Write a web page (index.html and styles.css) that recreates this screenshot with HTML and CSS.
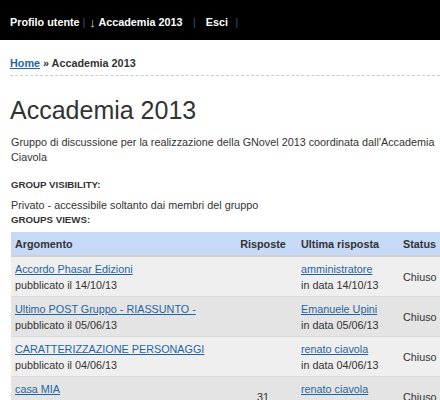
FILE: index.html
```html
<!DOCTYPE html>
<html lang="it">
<head>
<meta charset="utf-8">
<title>Accademia 2013</title>
<link rel="stylesheet" href="styles.css">
</head>
<body>
<div class="topnav">
  <a class="nav-item" href="#">Profilo utente</a>
  <span class="nav-sep nav-sep-first">|</span>
  <span class="nav-arrow">↓</span>
  <a class="nav-item" href="#">Accademia 2013</a>
  <span class="nav-sep">|</span>
  <a class="nav-item" href="#">Esci</a>
  <span class="nav-sep nav-sep-last">|</span>
</div>
<div class="breadcrumb"><a href="#">Home</a> » Accademia 2013</div>
<div class="content">
  <h1 class="title">Accademia 2013</h1>
  <p class="desc">Gruppo di discussione per la realizzazione della GNovel 2013 coordinata dall'Accademia Ciavola</p>
  <div class="label label-vis">GROUP VISIBILITY:</div>
  <p class="vis">Privato - accessibile soltanto dai membri del gruppo</p>
  <div class="label">GROUPS VIEWS:</div>
</div>
<table class="topics">
  <colgroup>
    <col class="c1"><col class="c2"><col class="c3"><col class="c4">
  </colgroup>
  <thead>
    <tr><th class="t-arg">Argomento</th><th class="t-risp">Risposte</th><th>Ultima risposta</th><th>Status</th></tr>
  </thead>
  <tbody>
    <tr class="odd">
      <td class="t-arg"><a href="#">Accordo Phasar Edizioni</a><br>pubblicato il 14/10/13</td>
      <td class="t-risp"></td>
      <td><a href="#">amministratore</a><br>in data 14/10/13</td>
      <td>Chiuso</td>
    </tr>
    <tr class="even">
      <td class="t-arg"><a href="#">Ultimo POST Gruppo - RIASSUNTO -</a><br>pubblicato il 05/06/13</td>
      <td class="t-risp"></td>
      <td><a href="#">Emanuele Upini</a><br>in data 05/06/13</td>
      <td>Chiuso</td>
    </tr>
    <tr class="odd">
      <td class="t-arg"><a href="#">CARATTERIZZAZIONE PERSONAGGI</a><br>pubblicato il 04/06/13</td>
      <td class="t-risp"></td>
      <td><a href="#">renato ciavola</a><br>in data 04/06/13</td>
      <td>Chiuso</td>
    </tr>
    <tr class="even">
      <td class="t-arg"><a href="#">casa MIA</a><br>pubblicato il 01/06/13</td>
      <td class="t-risp">31</td>
      <td><a href="#">renato ciavola</a><br>in data 01/06/13</td>
      <td>Chiuso</td>
    </tr>
  </tbody>
</table>
</body>
</html>
```
FILE: styles.css
```css
html, body {
  margin: 0;
  padding: 0;
  overflow: hidden;
  background: #fff;
}
body {
  font-family: "Liberation Sans", Arial, sans-serif;
  font-size: 10.8px;
  color: #333;
  width: 440px;
}
.topnav {
  background: #000;
  height: 40px;
  display: flex;
  align-items: center;
  padding: 4px 0 0 10px;
  box-sizing: border-box;
}
.nav-item {
  color: #fff;
  font-weight: bold;
  font-size: 10.8px;
  text-decoration: none;
}
.nav-sep {
  color: #2d5a78;
  margin: 0 10px 0 10.5px;
}
.nav-sep-first {
  margin: 0 3px 0 3px;
}
.nav-sep-last {
  margin-left: 7.5px;
}
.nav-arrow {
  display: inline-block;
  color: #d8d8d8;
  font-size: 13px;
  width: 8px;
  margin-right: 2px;
  text-align: center;
}
.breadcrumb {
  margin: 0 0 0 10px;
  padding: 16px 0 5px 0;
  line-height: 14px;
  font-weight: bold;
  border-bottom: 1px dashed #ccc;
}
.breadcrumb a {
  color: #1f64a4;
}
.content {
  padding: 0 4px 0 11px;
}
.title {
  font-size: 25px;
  font-weight: normal;
  color: #333;
  margin: 19px 0 0 -1px;
  line-height: 30px;
}
.desc {
  margin: 10px 0 0 0;
  line-height: 15px;
}
.label {
  font-size: 9.7px;
  font-weight: bold;
  text-transform: uppercase;
  line-height: 14px;
}
.label-vis {
  margin-top: 13px;
}
.vis {
  margin: 6px 0 0 0;
  line-height: 15px;
}
.topics {
  margin: 5px 0 0 11px;
  border-collapse: collapse;
  table-layout: fixed;
  width: 440px;
}
.c1 { width: 219px; }
.c2 { width: 66px; }
.c3 { width: 102px; }
.c4 { width: 53px; }
.topics th {
  background: #c6daf8;
  text-align: left;
  font-weight: bold;
  height: 24px;
  line-height: 16px;
  padding: 0 5px;
  box-sizing: border-box;
  border-bottom: 2px solid #d0d0d0;
}
.topics td {
  padding: 4px 5px 3px 5px;
  line-height: 16px;
  vertical-align: middle;
  border-bottom: 1px solid #dadada;
}
.topics .t-arg { padding-left: 4px; }
.topics .t-risp { text-align: center; }
.topics a {
  color: #1f64a4;
}
tr.odd td { background: #efefef; }
tr.even td { background: #e4e4e4; }
```
